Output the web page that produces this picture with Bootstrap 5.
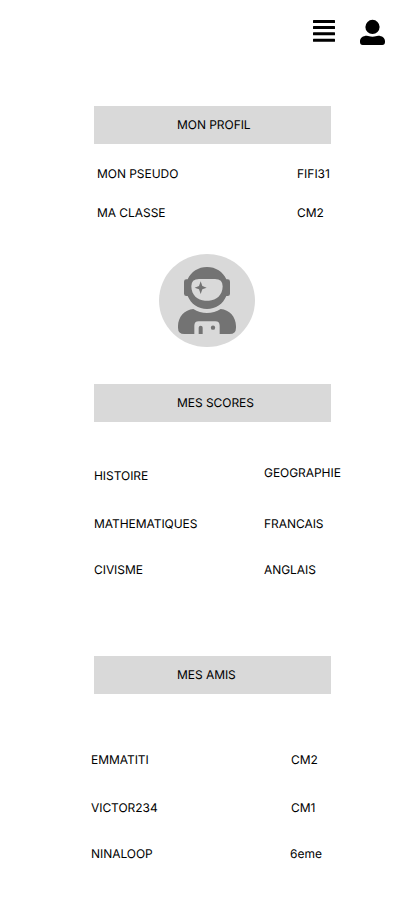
<!DOCTYPE html>
<html lang="fr">
<head>
<meta charset="utf-8">
<meta name="viewport" content="width=device-width, initial-scale=1">
<title>Mon profil</title>
<link href="https://cdn.jsdelivr.net/npm/bootstrap@5.3.0/dist/css/bootstrap.min.css" rel="stylesheet">
<style>
body { font: 400 12px/15px Inter, sans-serif; color: #000; background: #fff; text-rendering: geometricPrecision; }
.page { width: 412px; height: 917px; overflow: hidden; }
.topbar { height: 106px; padding: 19px 26px 0 0; gap: 24px; }
.topbar svg { display: block; }
.section-bar { width: 237px; height: 38px; margin-left: 94px; padding: 0 0 1px 83px; background: #d9d9d9; font-size: 12px; line-height: 15px; font-weight: 400; }
.section-bar, .info-list dt, .scores dd { letter-spacing: -.05px; }
.info-list { display: grid; align-items: start; }
.info-list dt, .info-list dd { margin: 0; font-weight: 400; white-space: nowrap; }
.profile { grid-template-columns: 200px auto; grid-template-rows: 39px 15px; margin: 22px 0 34px 97px; }
.scores { grid-template-columns: 170px auto; grid-template-rows: 51px 46px 15px; margin: 43px 0 79px 94px; }
.info-list.scores > :first-child { margin-top: 3px; }
.friends { grid-template-columns: 200px auto; grid-template-rows: 48px 46px 15px; margin: 58px 0 0 91px; }
.info-list.friends > :last-child { margin-left: -1px; }
.avatar { display: block; margin: 0 0 37px 159px; }
</style>
</head>
<body>
<main class="page">
  <nav class="topbar d-flex justify-content-end align-items-start" aria-label="Menu">
    <svg width="24" height="26" viewBox="0 0 24 26" aria-hidden="true"><g><rect x="1" y="1" width="22" height="3" rx=".5"/><rect x="1" y="7" width="22" height="3" rx=".5"/><rect x="1" y="13.300" width="22" height="3" rx=".5"/><rect x="1" y="19.700" width="22" height="3" rx=".5"/></g></svg>
    <svg width="26" height="26" viewBox="0 0 26 26" aria-hidden="true"><ellipse cx="12.5" cy="7.9" rx="7.1" ry="7.1"/><path d="M0 23V22.2C0 18.8 3 16.7 6.8 16.7C8.5 16.7 9.8 17.7 12.5 17.7S16.500 16.700 18.200 16.700C22 16.700 25 18.800 25 22.200V23C25 24.800 24 26 22.300 26H2.700C1 26 0 24.800 0 23Z"/></svg>
  </nav>

  <h2 class="section-bar d-flex align-items-center mb-0">MON PROFIL</h2>
  <dl class="info-list profile">
    <dt>MON PSEUDO</dt><dd>FIFI31</dd>
    <dt>MA CLASSE</dt><dd>CM2</dd>
  </dl>
  <svg class="avatar" width="96" height="93" viewBox="27 27 288 279" role="img" aria-label="Avatar astronaute">
    <ellipse cx="171" cy="166.500" rx="144" ry="139.500" fill="#d9d9d9"/>
    <g fill="#737373">
      <path fill-rule="evenodd" d="M113 103C123 80 145 66 171 66S219 80 229 103H233Q240 103 240 110V146Q240 153 233 153H229C219 177 197 192 171 192S123 177 113 153H109Q102 153 102 146V110Q102 103 109 103ZM147 102Q124 102 124 124C124 150 143 167 165 167H177C199 167 218 150 218 124Q218 102 195 102Z"/>
      <path d="M152 109L157 123L170 128L157 133L152 147L147 133L134 128L147 123Z"/>
      <path d="M130 192C154 208 188 208 212 192C238 194 258 216 258 243V248Q258 267 239 267H209V242Q209 229 196 229H146Q133 229 133 242V267H103Q84 267 84 248V243C84 216 104 194 130 192Z"/>
      <path d="M146 267V248Q146 242 152 242T158 248V267Z"/>
      <circle cx="189" cy="248" r="6.500"/>
    </g>
  </svg>

  <h2 class="section-bar d-flex align-items-center mb-0">MES SCORES</h2>
  <dl class="info-list scores">
    <dt>HISTOIRE</dt><dd>GEOGRAPHIE</dd>
    <dt>MATHEMATIQUES</dt><dd>FRANCAIS</dd>
    <dt>CIVISME</dt><dd>ANGLAIS</dd>
  </dl>

  <h2 class="section-bar d-flex align-items-center mb-0">MES AMIS</h2>
  <dl class="info-list friends">
    <dt>EMMATITI</dt><dd>CM2</dd>
    <dt>VICTOR234</dt><dd>CM1</dd>
    <dt>NINALOOP</dt><dd>6eme</dd>
  </dl>
</main>
<script src="https://cdn.jsdelivr.net/npm/bootstrap@5.3.0/dist/js/bootstrap.bundle.min.js"></script>
</body>
</html>
